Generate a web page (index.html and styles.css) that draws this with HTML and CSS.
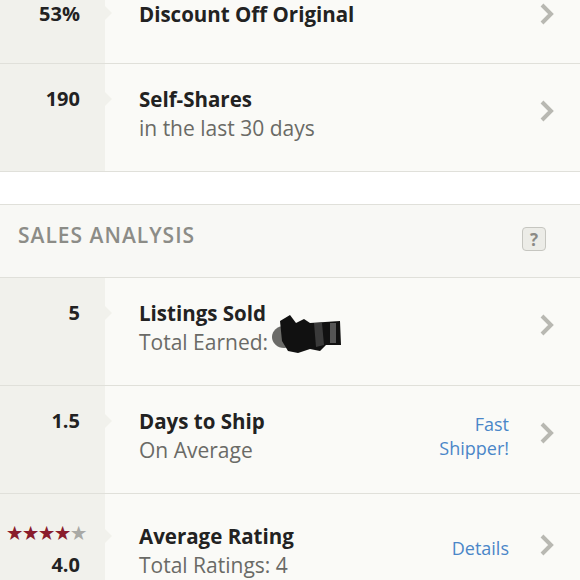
FILE: index.html
```html
<!DOCTYPE html>
<html lang="en">
  <head>
    <meta charset="UTF-8" />
    <meta name="viewport" content="width=device-width, initial-scale=1.0" />
    <title>Closet Insights</title>
    <link rel="stylesheet" href="styles.css">
  </head>
  <body>
    <div class="list">
      <div class="row first">
        <div class="num">53%</div>
        <div class="main">
          <div class="text">
            <div class="title">Discount Off Original</div>
          </div>
          <span class="chevron"><svg width="14" height="22" viewBox="0 0 14 22"><path d="M2 2 L11 11 L2 20" /></svg></span>
        </div>
      </div>
      <div class="row">
        <div class="num">190</div>
        <div class="main">
          <div class="text">
            <div class="title">Self-Shares</div>
            <div class="sub">in the last 30 days</div>
          </div>
          <span class="chevron"><svg width="14" height="22" viewBox="0 0 14 22"><path d="M2 2 L11 11 L2 20" /></svg></span>
        </div>
      </div>
    </div>

    <div class="gap"></div>

    <div class="list">
      <div class="section-head">
        <span class="section-title">SALES ANALYSIS</span>
        <span class="help">?</span>
      </div>
      <div class="row">
        <div class="num">5</div>
        <div class="main">
          <div class="text">
            <div class="title">Listings Sold</div>
            <div class="sub">Total Earned:<svg class="scribble" width="72" height="44" viewBox="0 0 72 44">
                <ellipse cx="14" cy="26" rx="12" ry="11" fill="#6b6b68" />
                <path d="M10 10 L20 4 L26 12 L34 8 L40 12 L70 10 L71 34 L56 34 L50 40 L40 38 L28 42 L18 40 L12 30 Z" fill="#111" />
                <path d="M44 12 L52 12 L54 34 L46 36 Z" fill="#3a3a3a" />
                <path d="M60 12 L66 12 L66 32 L60 32 Z" fill="#555" />
              </svg></div>
          </div>
          <span class="chevron"><svg width="14" height="22" viewBox="0 0 14 22"><path d="M2 2 L11 11 L2 20" /></svg></span>
        </div>
      </div>
      <div class="row">
        <div class="num">1.5</div>
        <div class="main">
          <div class="text">
            <div class="title">Days to Ship</div>
            <div class="sub">On Average</div>
          </div>
          <a class="aside" href="#">Fast<br>Shipper!</a>
          <span class="chevron"><svg width="14" height="22" viewBox="0 0 14 22"><path d="M2 2 L11 11 L2 20" /></svg></span>
        </div>
      </div>
      <div class="row rating">
        <div class="num">
          <div class="stars">
            <span class="star on">&#9733;</span><span class="star on">&#9733;</span><span class="star on">&#9733;</span><span class="star on">&#9733;</span><span class="star">&#9733;</span>
          </div>
          <div>4.0</div>
        </div>
        <div class="main">
          <div class="text">
            <div class="title">Average Rating</div>
            <div class="sub">Total Ratings: 4</div>
          </div>
          <a class="aside" href="#">Details</a>
          <span class="chevron"><svg width="14" height="22" viewBox="0 0 14 22"><path d="M2 2 L11 11 L2 20" /></svg></span>
        </div>
      </div>
    </div>
  </body>
</html>
```

FILE: styles.css
```css
body {
  font-family: "Open Sans", Lato, sans-serif;
  margin: 0;
  padding: 0;
  background-color: #fafaf7;
  color: #222;
}
.list {
  background-color: #fafaf7;
}
.gap {
  height: 32px;
  background-color: #fff;
  border-bottom: 1px solid #e0e0da;
}
.row {
  display: flex;
  border-bottom: 1px solid #e0e0da;
}
.num {
  position: relative;
  width: 80px;
  padding: 21px 25px 28px 0;
  background-color: #f1f1ec;
  text-align: right;
  font-size: 20px;
  font-weight: 700;
  line-height: 28px;
}
.num::after {
  content: "";
  position: absolute;
  right: -7px;
  top: 28px;
  border-top: 7px solid transparent;
  border-bottom: 7px solid transparent;
  border-left: 7px solid #f1f1ec;
}
.main {
  flex: 1;
  display: flex;
  align-items: center;
  padding: 21px 26px 28px 34px;
}
.text {
  flex: 1;
}
.title {
  font-size: 20.5px;
  font-weight: 700;
  line-height: 28px;
}
.sub {
  font-size: 21px;
  line-height: 30px;
  color: #6a6a66;
  position: relative;
}
.scribble {
  position: absolute;
  left: 131px;
  top: -16px;
}
.aside {
  color: #4a86c8;
  font-size: 18px;
  line-height: 24px;
  text-align: right;
  text-decoration: none;
  margin-right: 31px;
}
.chevron {
  display: flex;
  margin-bottom: 6px;
}
.chevron path {
  fill: none;
  stroke: #b8b8b2;
  stroke-width: 4;
}
.first .num,
.first .main {
  padding-top: 0;
  padding-bottom: 35px;
}
.first .num::after {
  top: 6px;
}
.first .chevron {
  margin-bottom: 0;
}
.section-head {
  display: flex;
  justify-content: space-between;
  align-items: flex-start;
  padding: 16px 34px 28px 18px;
  border-bottom: 1px solid #e0e0da;
  background-color: #f8f8f5;
}
.section-title {
  font-size: 21px;
  font-weight: 600;
  letter-spacing: 1px;
  line-height: 28px;
  color: #8c8c87;
}
.help {
  margin: 6px 0 -2px;
  width: 22px;
  height: 22px;
  border: 1px solid #c6c6c0;
  border-radius: 4px;
  background-color: #ecece7;
  color: #8a8a85;
  font-size: 17px;
  font-weight: 700;
  line-height: 23px;
  text-align: center;
}
.rating .num,
.rating .main {
  padding-top: 28px;
}
.rating .num::after {
  top: 35px;
}
.rating .chevron {
  margin-bottom: 12px;
}
.rating .aside {
  margin-bottom: 6px;
}
.stars {
  display: flex;
  justify-content: flex-end;
  gap: 1px;
  margin-right: -6px;
  margin-bottom: 7px;
  line-height: 22px;
  font-size: 17px;
}
.star {
  color: #a9a9a5;
}
.star.on {
  color: #8a1c2c;
}
```
